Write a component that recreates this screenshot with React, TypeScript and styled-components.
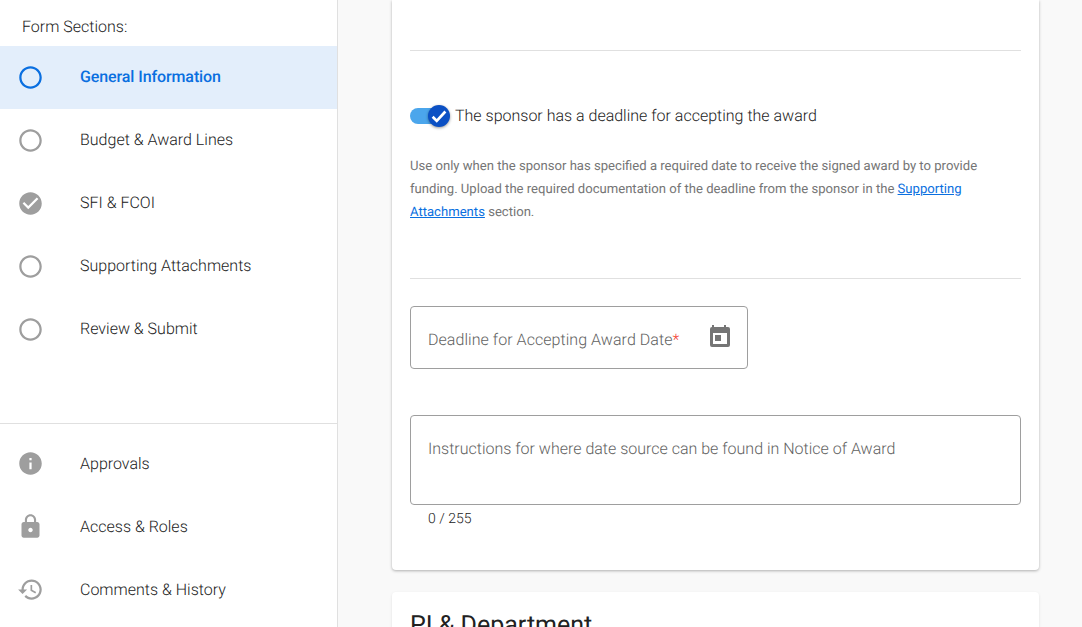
import React from 'react';
import styled, { createGlobalStyle } from 'styled-components';

const GlobalStyle = createGlobalStyle`
  html, body {
    margin: 0;
    padding: 0;
    height: 627px;
    overflow: hidden;
    background: #f9f9f9;
    font-family: Roboto, "Liberation Sans", sans-serif;
    text-rendering: geometricPrecision;
  }
`;

const ICONS = {
  open: 'M12 2C6.48 2 2 6.48 2 12s4.48 10 10 10 10-4.48 10-10S17.52 2 12 2zm0 18c-4.42 0-8-3.58-8-8s3.58-8 8-8 8 3.58 8 8-3.58 8-8 8z',
  done: 'M12 2C6.48 2 2 6.48 2 12s4.48 10 10 10 10-4.48 10-10S17.52 2 12 2zm-2 15l-5-5 1.41-1.41L10 14.17l7.59-7.59L19 8l-9 9z',
  info: 'M12 2C6.48 2 2 6.48 2 12s4.48 10 10 10 10-4.48 10-10S17.52 2 12 2zm1 15h-2v-6h2v6zm0-8h-2V7h2v2z',
  lock: 'M18 8h-1V6c0-2.76-2.24-5-5-5S7 3.24 7 6v2H6c-1.1 0-2 .9-2 2v10c0 1.1.9 2 2 2h12c1.1 0 2-.9 2-2V10c0-1.1-.9-2-2-2zm-6 9c-1.1 0-2-.9-2-2s.9-2 2-2 2 .9 2 2-.9 2-2 2zm3.1-9H8.9V6c0-1.71 1.39-3.1 3.1-3.1 1.71 0 3.1 1.39 3.1 3.1v2z',
  history: 'M13 3c-4.97 0-9 4.03-9 9H1l3.89 3.89.07.14L9 12H6c0-3.87 3.13-7 7-7s7 3.13 7 7-3.13 7-7 7c-1.93 0-3.68-.79-4.94-2.06l-1.42 1.42C8.27 19.99 10.51 21 13 21c4.97 0 9-4.03 9-9s-4.03-9-9-9zm-1 5v5l4.28 2.54.72-1.21-3.5-2.08V8H12z',
};

const SECTIONS = [
  { label: 'General Information', icon: ICONS.open, active: true },
  { label: 'Budget & Award Lines', icon: ICONS.open },
  { label: 'SFI & FCOI', icon: ICONS.done },
  { label: 'Supporting Attachments', icon: ICONS.open },
  { label: 'Review & Submit', icon: ICONS.open },
];

const EXTRAS = [
  { label: 'Approvals', icon: ICONS.info },
  { label: 'Access & Roles', icon: ICONS.lock },
  { label: 'Comments & History', icon: ICONS.history },
];

const Icon = ({ d }: { d: string }) => (
  <svg width={27} height={27} viewBox="0 0 24 24" fill="currentColor" aria-hidden="true">
    <path d={d} />
  </svg>
);

const App = () => (
  <Page>
    <GlobalStyle />
    <Sidebar>
      <SidebarTitle>Form Sections:</SidebarTitle>
      <NavList>
        {SECTIONS.map((s) => (
          <NavItem key={s.label} $active={s.active}>
            <NavIcon>
              <Icon d={s.icon} />
            </NavIcon>
            <NavLabel $raised>{s.label}</NavLabel>
          </NavItem>
        ))}
      </NavList>
      <SidebarDivider />
      <NavList>
        {EXTRAS.map((s) => (
          <NavItem key={s.label}>
            <NavIcon>
              <Icon d={s.icon} />
            </NavIcon>
            <NavLabel>{s.label}</NavLabel>
          </NavItem>
        ))}
      </NavList>
    </Sidebar>
    <Main>
      <FormCard>
        <Divider />
        <ToggleRow>
          <Toggle>
            <ToggleThumb>
              <svg width="18" height="18" viewBox="0 0 24 24" fill="none" stroke="#fff" strokeWidth="3.6">
                <path d="M3.5 13l5.5 5.5L20.5 6" />
              </svg>
            </ToggleThumb>
          </Toggle>
          <ToggleLabel>The sponsor has a deadline for accepting the award</ToggleLabel>
        </ToggleRow>
        <HelpText>
          Use only when the sponsor has specified a required date to receive the signed award by to provide
          funding. Upload the required documentation of the deadline from the sponsor in the{' '}
          <HelpLink href="#">Supporting Attachments</HelpLink> section.
        </HelpText>
        <Divider />
        <DateField>
          <DatePlaceholder>
            Deadline for Accepting Award Date<Required>*</Required>
          </DatePlaceholder>
          <CalendarIcon width="22" height="24" viewBox="0 0 22 24" fill="currentColor" aria-hidden="true">
            <path
              fillRule="evenodd"
              d="M3 1h2v2h10V1h2v2h2a2 2 0 0 1 2 2v16a2 2 0 0 1-2 2H3a2 2 0 0 1-2-2V5a2 2 0 0 1 2-2zM4 9v11h14V9z"
            />
            <rect x="6" y="11" width="6" height="6" />
          </CalendarIcon>
        </DateField>
        <TextAreaField>
          <Placeholder>Instructions for where date source can be found in Notice of Award</Placeholder>
        </TextAreaField>
        <Counter>0 / 255</Counter>
      </FormCard>
      <SectionCard>
        <SectionTitle>PI &amp; Department</SectionTitle>
      </SectionCard>
    </Main>
  </Page>
);

const Page = styled.div`
  display: flex;
  width: 1082px;
  height: 627px;
  overflow: hidden;
`;

const Sidebar = styled.aside`
  flex: none;
  width: 337px;
  height: 627px;
  background: #fff;
  border-right: 1px solid #e0e0e0;
`;

const SidebarTitle = styled.div`
  height: 46px;
  box-sizing: border-box;
  padding: 17px 0 0 22px;
  font-size: 16px;
  font-weight: 300;
  line-height: 19px;
  color: #212121;
`;

const NavList = styled.nav`
  display: flex;
  flex-direction: column;
`;

const NavItem = styled.div<{ $active?: boolean }>`
  display: flex;
  align-items: center;
  height: 63px;
  font-size: 16px;
  font-weight: ${(p) => (p.$active ? 500 : 300)};
  letter-spacing: ${(p) => (p.$active ? '-0.1px' : 'normal')};
  color: ${(p) => (p.$active ? '#0a6fe0' : '#212121')};
  background: ${(p) => (p.$active ? '#e3eefb' : 'transparent')};
  svg {
    color: ${(p) => (p.$active ? '#0a6fe0' : '#9e9e9e')};
  }
`;

const NavIcon = styled.span`
  display: flex;
  flex: none;
  width: 80px;
  padding-left: 17px;
  box-sizing: border-box;
`;

const NavLabel = styled.span<{ $raised?: boolean }>`
  padding-bottom: ${(p) => (p.$raised ? '2px' : '0')};
`;

const SidebarDivider = styled.div`
  height: 1px;
  margin: 62px 0 8px;
  background: #e0e0e0;
`;

const Main = styled.main`
  flex: 1;
  min-width: 0;
  padding: 0 43px 0 54px;
`;

const FormCard = styled.section`
  height: 570px;
  box-sizing: border-box;
  padding: 50px 18px 0;
  background: #fff;
  border-radius: 0 0 4px 4px;
  box-shadow: 0 1px 3px rgba(0, 0, 0, 0.3);
`;

const Divider = styled.div`
  height: 1px;
  background: #e0e0e0;
`;

const ToggleRow = styled.div`
  display: flex;
  align-items: center;
  gap: 45px;
  height: 26px;
  margin-top: 52px;
`;

const ToggleLabel = styled.span`
  padding-bottom: 2px;
  font-size: 16px;
  font-weight: 300;
  color: #212121;
`;

const Toggle = styled.div`
  position: relative;
  flex: none;
  width: 0;
  height: 16px;
  &::before {
    content: '';
    position: absolute;
    left: 0;
    top: 0;
    width: 30px;
    height: 16px;
    border-radius: 8px;
    background: #4ba6ec;
  }
`;

const ToggleThumb = styled.div`
  position: absolute;
  left: 18px;
  top: -3px;
  display: flex;
  align-items: center;
  justify-content: center;
  width: 22px;
  height: 22px;
  border-radius: 50%;
  background: #0b50c4;
  box-shadow: 0 1px 3px rgba(0, 0, 0, 0.4);
`;

const HelpText = styled.p`
  margin: 26px 0 54px;
  font-size: 13.1px;
  font-weight: 400;
  line-height: 23px;
  color: #757575;
`;

const HelpLink = styled.a`
  color: #0a6fe0;
`;

const FieldBase = styled.div`
  display: flex;
  box-sizing: border-box;
  border: 1px solid #9e9e9e;
  border-radius: 4px;
  padding: 0 17px;
`;

const DateField = styled(FieldBase)`
  align-items: center;
  justify-content: space-between;
  width: 338px;
  height: 63px;
  margin-top: 27px;
  padding-right: 16px;
`;

const TextAreaField = styled(FieldBase)`
  height: 90px;
  margin-top: 46px;
  padding-top: 23px;
`;

const Placeholder = styled.span`
  font-size: 16px;
  font-weight: 300;
  line-height: 19px;
  color: #616161;
`;

const DatePlaceholder = styled(Placeholder)`
  padding-top: 4px;
  letter-spacing: 0.05px;
`;

const Required = styled.span`
  color: #f44336;
`;

const CalendarIcon = styled.svg`
  flex: none;
  margin-bottom: 3px;
  color: #757575;
`;

const Counter = styled.div`
  margin: 6px 0 0 18px;
  font-size: 14px;
  font-weight: 300;
  line-height: 17px;
  color: #212121;
`;

const SectionCard = styled.section`
  margin-top: 22px;
  height: 120px;
  padding: 20px 18px 0;
  background: #fff;
  border-radius: 4px;
  box-shadow: 0 1px 3px rgba(0, 0, 0, 0.1);
`;

const SectionTitle = styled.h2`
  margin: 0;
  font-size: 25px;
  font-weight: 400;
  line-height: 28px;
  color: #212121;
`;

export default App;
